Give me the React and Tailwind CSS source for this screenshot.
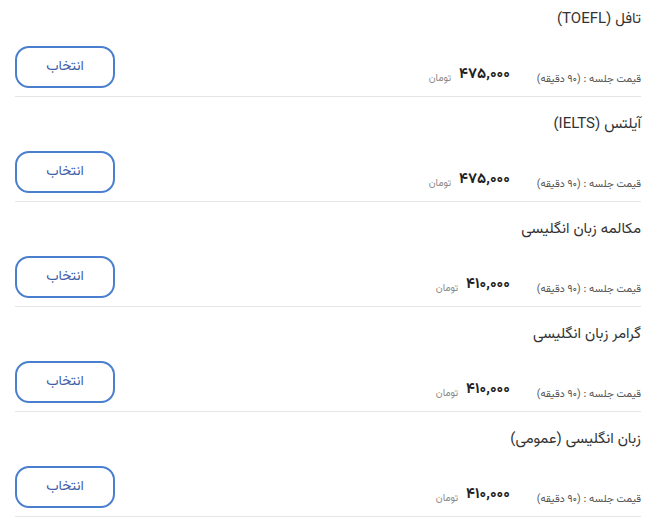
const courses = [
  { title: "تافل (TOEFL)", price: "۴۷۵,۰۰۰" },
  { title: "آیلتس (IELTS)", price: "۴۷۵,۰۰۰" },
  { title: "مکالمه زبان انگلیسی", price: "۴۱۰,۰۰۰" },
  { title: "گرامر زبان انگلیسی", price: "۴۱۰,۰۰۰" },
  { title: "زبان انگلیسی (عمومی)", price: "۴۱۰,۰۰۰" },
];

function CourseRow({ title, price }) {
  return (
    <div className="h-[105px] border-b border-[#e6e6e6] flex flex-col">
      <div className="mt-[18px] h-[20px] leading-[20px] text-[15px] text-[#333]">{title}</div>
      <div className="mt-[16px] flex items-end justify-between">
        <div className="flex items-end mb-[1px]">
          <span className="text-[10.5px] leading-[14px] text-[#555]">قیمت جلسه : (۹۰ دقیقه)</span>
          <span className="mr-[27px] text-[15px] leading-[18px] font-bold text-[#222] mb-[3px]">{price}</span>
          <span className="mr-[8px] text-[10px] leading-[14px] text-[#888] mb-[1px]">تومان</span>
        </div>
        <button className="w-[100px] h-[42px] rounded-[14px] border-2 border-[#4a7fcf] text-[14px] text-[#3d5ea6] bg-white">
          انتخاب
        </button>
      </div>
    </div>
  );
}

export default function App() {
  return (
    <div
      dir="rtl"
      className="w-[665px] h-[526px] overflow-hidden bg-white pl-[15px] pr-[24px]"
      style={{ fontFamily: 'Vazirmatn, "DejaVu Sans", sans-serif' }}
    >
      <div className="-mt-[8px]">
        {courses.map((c) => (
          <CourseRow key={c.title} {...c} />
        ))}
      </div>
    </div>
  );
}
